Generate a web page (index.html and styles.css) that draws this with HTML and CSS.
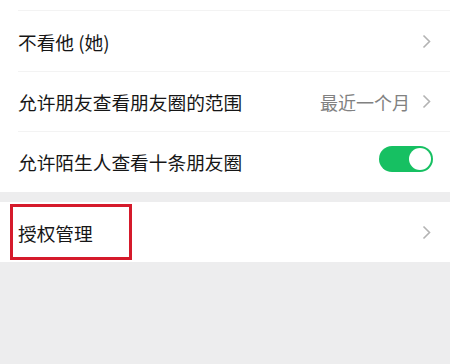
FILE: index.html
```html
<!DOCTYPE html>
<html lang="zh-CN">
<head>
<meta charset="utf-8">
<title>朋友圈权限</title>
<link rel="stylesheet" href="styles.css">
</head>
<body>
<div class="page">
  <div class="group">
    <div class="top-spacer"></div>
    <div class="row">
      <span class="label">不看他 (她)</span>
      <span class="right">
        <svg class="chev" width="9" height="15" viewBox="0 0 9 15"><path d="M1.5 1.5 L7.5 7.5 L1.5 13.5" fill="none" stroke="#b3b3b3" stroke-width="1.6"/></svg>
      </span>
    </div>
    <div class="row divided">
      <span class="label">允许朋友查看朋友圈的范围</span>
      <span class="right">
        <span class="value">最近一个月</span>
        <svg class="chev" width="9" height="15" viewBox="0 0 9 15"><path d="M1.5 1.5 L7.5 7.5 L1.5 13.5" fill="none" stroke="#b3b3b3" stroke-width="1.6"/></svg>
      </span>
    </div>
    <div class="row divided last">
      <span class="label">允许陌生人查看十条朋友圈</span>
      <span class="right">
        <span class="toggle"><span class="knob"></span></span>
      </span>
    </div>
  </div>
  <div class="group second">
    <div class="row auth">
      <span class="label">授权管理</span>
      <span class="right">
        <svg class="chev" width="9" height="15" viewBox="0 0 9 15"><path d="M1.5 1.5 L7.5 7.5 L1.5 13.5" fill="none" stroke="#b3b3b3" stroke-width="1.6"/></svg>
      </span>
      <span class="highlight"></span>
    </div>
  </div>
</div>
</body>
</html>
```

FILE: styles.css
```css
html, body {
  margin: 0;
  padding: 0;
  background: #ededee;
}
body {
  width: 450px;
  height: 364px;
  overflow: hidden;
  font-family: "Noto Sans CJK SC", "Noto Sans", sans-serif;
  color: #161616;
}
.group {
  background: #ffffff;
}
.group.second {
  margin-top: 10px;
}
.top-spacer {
  height: 11px;
  position: relative;
}
.top-spacer::after {
  content: "";
  position: absolute;
  left: 18px;
  right: 0;
  top: 10px;
  height: 1px;
  background: #f3f3f3;
}
.row {
  position: relative;
  height: 60px;
  display: flex;
  align-items: center;
  justify-content: space-between;
  padding: 0 18px 0 18px;
}
.row.last {
  height: 61px;
}
.row.divided::before {
  content: "";
  position: absolute;
  left: 18px;
  right: 0;
  top: 0;
  height: 1px;
  background: #f3f3f3;
}
.label {
  font-size: 18.7px;
  line-height: 1;
  padding-top: 2px;
}
.right {
  display: flex;
  align-items: center;
  gap: 12px;
}
.value {
  font-size: 18px;
  line-height: 1;
  color: #818181;
  padding-top: 2px;
}
.chev {
  display: block;
  margin-right: 1px;
}
.toggle {
  display: block;
  width: 54px;
  height: 26px;
  border-radius: 13px;
  background: #16c062;
  position: relative;
  margin-bottom: 6px;
  margin-right: -1px;
}
.knob {
  position: absolute;
  right: 2px;
  top: 2px;
  width: 22px;
  height: 22px;
  border-radius: 50%;
  background: #ffffff;
}
.highlight {
  position: absolute;
  left: 10px;
  top: 2px;
  width: 116px;
  height: 50px;
  border: 3px solid #d51a2b;
}
```
